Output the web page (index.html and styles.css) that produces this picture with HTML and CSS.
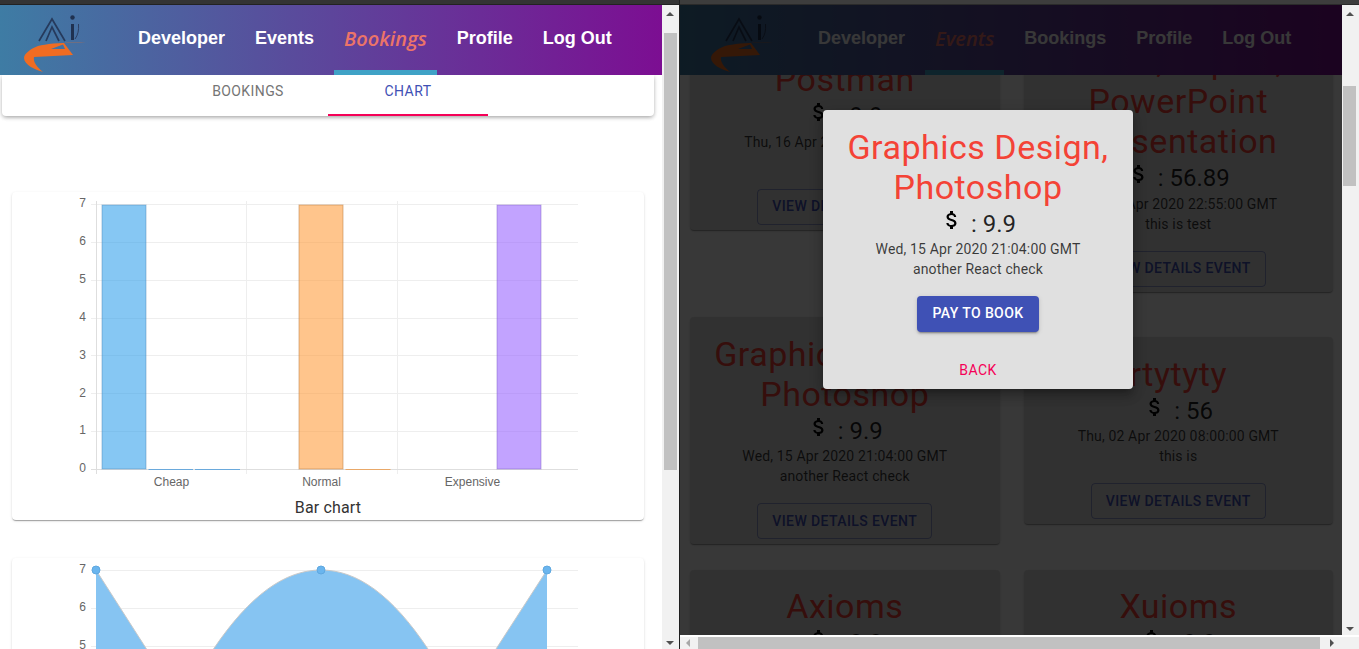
FILE: index.html
```html
<!DOCTYPE html>
<html lang="en">
<head>
<meta charset="utf-8">
<title>Bookings and Events</title>
<link rel="stylesheet" href="styles.css">
</head>
<body>
<svg class="defs" width="0" height="0" aria-hidden="true">
  <symbol id="money" viewBox="0 0 24 24"><path d="M11.8 10.9c-2.27-.59-3-1.2-3-2.15 0-1.09 1.01-1.85 2.7-1.85 1.78 0 2.44.85 2.5 2.1h2.21c-.07-1.72-1.12-3.3-3.21-3.81V3h-3v2.16c-1.94.42-3.5 1.68-3.5 3.61 0 2.31 1.91 3.46 4.7 4.13 2.5.6 3 1.48 3 2.41 0 .69-.49 1.79-2.7 1.79-2.06 0-2.87-.92-2.98-2.1h-2.2c.12 2.19 1.76 3.42 3.68 3.83V21h3v-2.15c1.95-.37 3.5-1.5 3.5-3.55 0-2.84-2.43-3.81-4.7-4.4z"/></symbol>
  <symbol id="logo" viewBox="0 0 100 70">
    <path d="M39 36 52 14 65 36M46 36 52 22 59 36" fill="none" stroke="#263a5c" stroke-width="1.700"/>
    <circle cx="72.500" cy="12.500" r="2.200" fill="#1f3150"/>
    <path d="M72.500 19V35" stroke="#1f3150" stroke-width="3"/>
    <path d="M78.500 19C79 25 78 30 75 34" fill="none" stroke="#2c3f63" stroke-width="1"/>
    <path fill="#f06c22" fill-rule="evenodd" d="M86 38C70 37 48 38 38 41 30 44 24 49 24 53 24 60 36 65 43 67 37 62 33 57 34 52L73 50 64 38ZM63 39.500 51 44H65Z"/>
  </symbol>
</svg>

<div class="desktop">
  <section class="window window-bookings">
    <div class="titlebar"></div>
    <div class="window-body">
      <div class="viewport">
        <header class="app-header">
          <svg class="logo"><use href="#logo"/></svg>
          <nav class="nav">
            <a class="nav-link">Developer</a>
            <a class="nav-link">Events</a>
            <a class="nav-link nav-link-active">Bookings</a>
            <a class="nav-link">Profile</a>
            <a class="nav-link">Log Out</a>
          </nav>
        </header>
        <div class="tabs">
          <span class="tab">Bookings</span>
          <span class="tab tab-active">Chart</span>
        </div>
        <div class="chart-card chart-card-bar">
          <svg class="chart chart-bar" viewBox="12 192 632 298">
            <g class="grid">
              <path d="M91 204.500H578M91 242.500H578M91 280.500H578M91 318.500H578M91 355.500H578M91 393.500H578M91 431.500H578"/>
              <path d="M246.500 201V474M397.500 201V474"/>
            </g>
            <path class="axis" d="M96.500 201V474M91 469.500H578"/>
            <rect class="bar bar-blue" x="102" y="205" width="44" height="264"/>
            <rect class="bar bar-orange" x="299" y="205" width="44" height="264"/>
            <rect class="bar bar-purple" x="497" y="205" width="44" height="264"/>
            <path class="zero-blue" d="M148.500 469.500H193M195 469.500H240"/>
            <path class="zero-orange" d="M345.500 469.500H390.500"/>
            <g class="ticks">
              <text x="86" y="207">7</text><text x="86" y="245">6</text><text x="86" y="283">5</text><text x="86" y="321">4</text><text x="86" y="359">3</text><text x="86" y="397">2</text><text x="86" y="434">1</text><text x="86" y="472">0</text>
            </g>
            <g class="labels">
              <text x="171.500" y="486">Cheap</text><text x="321.500" y="486">Normal</text><text x="472.500" y="486">Expensive</text>
            </g>
          </svg>
          <p class="chart-title">Bar chart</p>
        </div>
        <div class="chart-card">
          <svg class="chart chart-line" viewBox="12 558 632 100">
            <path class="grid-line" d="M91 570.500H578M91 608.500H578M91 646.500H578"/>
            <path class="area" d="M96 570 146.500 649H96ZM213.500 649C250 595 285 570 321 570 357 570 392 595 428 649ZM496 649 547 570V649Z"/>
            <path class="area-edge" d="M96 570 146.500 649M213.500 649C250 595 285 570 321 570 357 570 392 595 428 649M496 649 547 570"/>
            <circle class="point" cx="96" cy="570" r="4"/><circle class="point" cx="321" cy="570" r="4"/><circle class="point" cx="547" cy="570" r="4"/>
            <g class="ticks"><text x="86" y="573">7</text><text x="86" y="611">6</text><text x="86" y="649">5</text></g>
          </svg>
        </div>
      </div>
      <div class="vscroll vscroll-left">
        <span class="arrow arrow-up"></span>
        <span class="thumb thumb-left"></span>
        <span class="arrow arrow-down"></span>
      </div>
    </div>
  </section>

  <section class="window window-events">
    <div class="titlebar titlebar-right"></div>
    <div class="window-body window-body-events">
      <div class="viewport viewport-events">
        <header class="app-header app-header-events">
          <svg class="logo logo-events"><use href="#logo"/></svg>
          <nav class="nav">
            <a class="nav-link">Developer</a>
            <a class="nav-link nav-link-active">Events</a>
            <a class="nav-link">Bookings</a>
            <a class="nav-link">Profile</a>
            <a class="nav-link">Log Out</a>
          </nav>
        </header>
        <div class="event-grid">
          <article class="event-card">
            <h2 class="event-title">Postman</h2>
            <p class="event-price"><svg class="money"><use href="#money"/></svg> : 9.9</p>
            <p class="event-text">Thu, 16 Apr 2020 10:00:00 GMT</p>
            <p class="event-text">test</p>
            <button class="btn-outline">View Details Event</button>
          </article>
          <article class="event-card event-card-tall">
            <h2 class="event-title">Microsoft Office,<br>Excel, Topics,<br>PowerPoint<br>Presentation</h2>
            <p class="event-price"><svg class="money"><use href="#money"/></svg> : 56.89</p>
            <p class="event-text">Sat, 11 Apr 2020 22:55:00 GMT</p>
            <p class="event-text">this is test</p>
            <button class="btn-outline">View Details Event</button>
          </article>
          <article class="event-card">
            <h2 class="event-title">Graphics Design, Photoshop</h2>
            <p class="event-price"><svg class="money"><use href="#money"/></svg> : 9.9</p>
            <p class="event-text">Wed, 15 Apr 2020 21:04:00 GMT</p>
            <p class="event-text">another React check</p>
            <button class="btn-outline">View Details Event</button>
          </article>
          <article class="event-card">
            <h2 class="event-title">rtytyty</h2>
            <p class="event-price"><svg class="money"><use href="#money"/></svg> : 56</p>
            <p class="event-text">Thu, 02 Apr 2020 08:00:00 GMT</p>
            <p class="event-text">this is</p>
            <button class="btn-outline">View Details Event</button>
          </article>
          <article class="event-card">
            <h2 class="event-title">Axioms</h2>
            <p class="event-price"><svg class="money"><use href="#money"/></svg> : 9.9</p>
          </article>
          <article class="event-card">
            <h2 class="event-title">Xuioms</h2>
            <p class="event-price"><svg class="money"><use href="#money"/></svg> : 9.9</p>
          </article>
        </div>
        <div class="backdrop"></div>
        <div class="dialog">
          <h2 class="event-title">Graphics Design, Photoshop</h2>
          <p class="event-price"><svg class="money"><use href="#money"/></svg> : 9.9</p>
          <p class="event-text">Wed, 15 Apr 2020 21:04:00 GMT</p>
          <p class="event-text">another React check</p>
          <button class="btn-primary">Pay to Book</button>
          <button class="btn-text">Back</button>
        </div>
      </div>
      <div class="vscroll vscroll-right">
        <span class="arrow arrow-up"></span>
        <span class="thumb thumb-right"></span>
        <span class="arrow arrow-down"></span>
      </div>
      <div class="hscroll">
        <span class="arrow arrow-left"></span>
        <span class="hthumb"></span>
        <span class="arrow arrow-right"></span>
      </div>
    </div>
  </section>
</div>
</body>
</html>
```
FILE: styles.css
```css
* { box-sizing: border-box; }
html, body { margin: 0; height: 100%; overflow: hidden; }
body { background: #1e1e1e; font-family: Roboto, "Liberation Sans", sans-serif; }
p, h2 { margin: 0; }
.defs { position: absolute; }

.desktop { display: flex; height: 649px; gap: 1px; }
.window { display: flex; flex-direction: column; height: 649px; }
.window-bookings { width: 679px; }
.window-events { width: 679px; }
.titlebar { height: 5px; background: #343434; border-bottom: 1px solid #222; flex: none; }
.titlebar-right { background: #3d3d3d; border-bottom-color: #2a2a2a; }
.window-body { display: flex; flex: 1; min-height: 0; }
.window-body-events { display: grid; grid-template-columns: 662px 17px; grid-template-rows: 630px 14px; }

.viewport { width: 662px; background: #fff; overflow: hidden; position: relative; }
.viewport-events { height: 630px; }

.app-header { height: 70px; display: flex; background: linear-gradient(to right, #3e7ca4, #7c0e92); position: relative; z-index: 1; }
.logo { width: 100px; height: 70px; flex: none; }
.logo-events { margin-left: 7px; margin-right: -7px; }
.nav { display: flex; gap: 10px; margin-left: 28px; }
.nav-link { display: flex; align-items: center; padding: 2px 10px 0; border-bottom: 5px solid transparent; color: #fff; font: bold 18px "Liberation Sans", Arial, sans-serif; white-space: nowrap; }
.nav-link-active { color: #ec7468; font: italic 600 20px "Open Sans", "Liberation Sans", sans-serif; border-bottom-color: #3fa2c6; }

.tabs { height: 41px; margin: 0 8px 0 2px; display: flex; justify-content: center; background: #fff; border-radius: 0 0 4px 4px; box-shadow: 0 2px 4px -1px rgba(0,0,0,.3), 0 1px 5px rgba(0,0,0,.14); }
.tab { width: 160px; height: 41px; display: flex; align-items: center; justify-content: center; padding-bottom: 8px; font-size: 14px; font-weight: 400; letter-spacing: .4px; text-transform: uppercase; color: #757575; border-bottom: 2px solid transparent; }
.tab-active { color: #3f51b5; border-bottom-color: #f50057; }

.chart-card { margin: 38px 18px 0 12px; background: #fff; border-radius: 4px; box-shadow: 0 2px 1px -1px rgba(0,0,0,.2), 0 1px 1px rgba(0,0,0,.14), 0 1px 3px rgba(0,0,0,.12); }
.chart-card-bar { margin-top: 76px; height: 328px; }
.chart { display: block; width: 632px; }
.chart-bar { height: 298px; }
.chart-line { height: 100px; }
.chart-title { text-align: center; font-size: 16px; line-height: 24px; letter-spacing: .15px; color: #333; margin-top: 6px; }

.grid path, .grid-line { stroke: #eee; stroke-width: 1; fill: none; }
.axis { stroke: #dedede; stroke-width: 1; fill: none; }
.bar { stroke-width: 1; }
.bar-blue { fill: rgba(54,162,235,.6); stroke: rgba(70,130,180,.45); }
.bar-orange { fill: rgba(255,159,64,.6); stroke: rgba(190,130,70,.55); }
.bar-purple { fill: rgba(153,102,255,.6); stroke: rgba(120,90,190,.45); }
.zero-blue { stroke: #6aa9dc; stroke-width: 1; fill: none; }
.zero-orange { stroke: #e9a868; stroke-width: 1; fill: none; }
.ticks text { font: 12px "Liberation Sans", Arial, sans-serif; fill: #666; text-anchor: end; }
.labels text { font: 12px "Liberation Sans", Arial, sans-serif; fill: #666; text-anchor: middle; }
.area { fill: #86c4f2; }
.area-edge { fill: none; stroke: #c9c9c9; stroke-width: 1; }
.point { fill: #6ab5ee; stroke: #5fa8e0; stroke-width: 1; }

.event-grid { display: grid; grid-template-columns: 1fr 1fr; column-gap: 24px; row-gap: 25.5px; align-items: center; margin: -94.5px 9px 0 10px; }
.event-card { background: #e0e0e0; border-radius: 4px; padding: 16.5px 0 5px; text-align: center; box-shadow: 0 2px 1px -1px rgba(0,0,0,.2), 0 1px 1px rgba(0,0,0,.14), 0 1px 3px rgba(0,0,0,.12); }
.event-card-tall { padding-top: 20.5px; }
.event-title { font-size: 34px; font-weight: 400; line-height: 40px; letter-spacing: .5px; color: #f44336; }
.event-price { font-size: 24px; line-height: 35px; height: 32.5px; color: rgba(0,0,0,.85); }
.money { width: 24px; height: 24px; fill: #000; vertical-align: 0; margin-right: 1px; }
.event-text { font-size: 14px; line-height: 20px; letter-spacing: .15px; color: rgba(0,0,0,.75); }
.btn-outline, .btn-primary, .btn-text { display: block; margin: 17px auto 0; height: 36px; font: 500 14px Roboto, sans-serif; letter-spacing: .4px; text-transform: uppercase; border-radius: 4px; background: transparent; }
.btn-outline { width: 175px; padding: 0 0 1px; color: #3f51b5; border: 1px solid rgba(63,81,181,.5); }
.btn-primary { width: 122px; padding: 0 0 2px; color: #fff; background: #3f51b5; border: 0; box-shadow: 0 3px 1px -2px rgba(0,0,0,.2), 0 2px 2px rgba(0,0,0,.14), 0 1px 5px rgba(0,0,0,.12); }
.btn-text { margin-top: 20px; width: 64px; padding: 0; color: #f50057; font-weight: 400; border: 0; }

.backdrop { position: absolute; inset: 0; z-index: 2; background: rgba(0,0,0,.78); }
.dialog { position: absolute; z-index: 3; left: 143px; top: 105px; width: 310px; height: 279px; padding-top: 16.5px; text-align: center; background: #e0e0e0; border-radius: 4px; box-shadow: 0 8px 10px 1px rgba(0,0,0,.14), 0 3px 14px 2px rgba(0,0,0,.12), 0 5px 5px -3px rgba(0,0,0,.2); }

.vscroll { width: 17px; background: #f1f1f1; display: flex; flex-direction: column; position: relative; }
.vscroll-left { height: 644px; }
.vscroll-right { height: 630px; grid-column: 2; grid-row: 1; }
.thumb { position: absolute; left: 2px; width: 13px; background: #c1c1c1; }
.thumb-left { top: 28px; height: 437px; }
.thumb-right { left: 1px; top: 81px; height: 100px; }
.arrow { position: absolute; width: 0; height: 0; border-style: solid; border-color: transparent; }
.arrow-up { top: 7px; left: 4px; border-width: 0 4px 4px; border-bottom-color: #505050; }
.arrow-down { bottom: 4px; left: 4px; border-width: 4px 4px 0; border-top-color: #505050; }
.hscroll { grid-column: 1 / 3; grid-row: 2; height: 14px; background: #f1f1f1; border-top: 2px solid #fff; position: relative; }
.hthumb { position: absolute; left: 18px; top: 0; bottom: 0; width: 622px; background: #c1c1c1; }
.arrow-left { left: 6px; top: 2px; border-width: 4px 4px 4px 0; border-right-color: #a8a8a8; }
.arrow-right { left: 650px; top: 2px; border-width: 4px 0 4px 4px; border-left-color: #505050; }
```
